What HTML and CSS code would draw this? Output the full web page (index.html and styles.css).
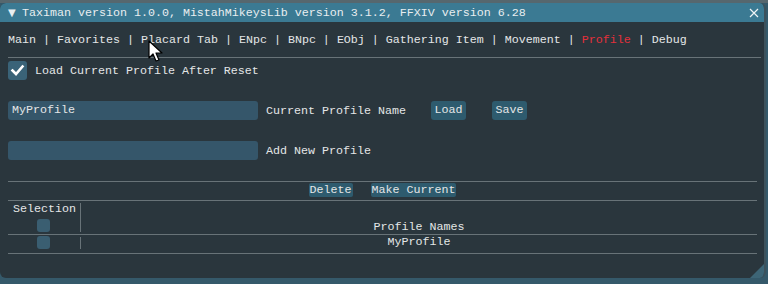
FILE: index.html
```html
<!DOCTYPE html>
<html>
<head>
    <title>Taximan</title>
    <link rel="stylesheet" href="styles.css">
</head>
<body>
    <div class="window">
        <div class="titlebar">
            <span class="arrow">&#9660;</span>
            <span class="title">Taximan version 1.0.0, MistahMikeysLib version 3.1.2, FFXIV version 6.28</span>
            <svg class="close" width="10" height="10" viewBox="0 0 10 10">
                <path d="M1 1 L9 9 M9 1 L1 9" stroke="#f0f4f6" stroke-width="1.2" fill="none"/>
            </svg>
        </div>
        <div class="content">
            <div class="tabs"><span>Main</span> | <span>Favorites</span> | <span>Placard Tab</span> | <span>ENpc</span> | <span>BNpc</span> | <span>EObj</span> | <span>Gathering Item</span> | <span>Movement</span> | <span class="active">Profile</span> | <span>Debug</span></div>

            <div class="check-row">
                <span class="checkbox">
                    <svg width="19" height="19" viewBox="0 0 19 19">
                        <path d="M4.5 9.5 L8 13 L14.5 5.5" stroke="#ffffff" stroke-width="2.6" fill="none" stroke-linecap="square"/>
                    </svg>
                </span>
                <span class="label">Load Current Profile After Reset</span>
            </div>

            <div class="field-row">
                <div class="input">MyProfile</div>
                <span class="label">Current Profile Name</span>
                <button class="btn load">Load</button>
                <button class="btn save">Save</button>
            </div>

            <div class="field-row">
                <div class="input"></div>
                <span class="label">Add New Profile</span>
            </div>

            <div class="table">
                <div class="table-actions">
                    <button class="btn small">Delete</button>
                    <button class="btn small">Make Current</button>
                </div>
                <div class="trow head">
                    <div class="sel">
                        <div class="sel-inner">
                            <span class="sel-title">Selection</span>
                            <span class="box"></span>
                        </div>
                    </div>
                    <div class="name">Profile Names</div>
                </div>
                <div class="trow item">
                    <div class="sel">
                        <div class="sel-inner">
                            <span class="box"></span>
                        </div>
                    </div>
                    <div class="name">MyProfile</div>
                </div>
            </div>
        </div>
        <span class="grip"></span>
    </div>

    <svg class="cursor" width="16" height="24" viewBox="0 0 16 24">
        <path d="M1 1 L1 18 L5 14 L8 21 L11 20 L8 13 L14 13 Z" fill="#ffffff" stroke="#000000" stroke-width="1.2" stroke-linejoin="round"/>
    </svg>
</body>
</html>
```
FILE: styles.css
```css
body {
    margin: 0;
    width: 768px;
    height: 284px;
    overflow: hidden;
    background: linear-gradient(#56676e 0, #56676e 3px, #35596a 3px);
    font-family: 'Liberation Mono', 'DejaVu Sans Mono', monospace;
    font-size: 11.67px;
    color: #e4e6e7;
    position: relative;
}
.window {
    position: relative;
    margin-top: 3px;
    width: 764px;
    height: 275px;
    background: #2a363d;
    border-radius: 6px;
    border-right: 2px solid #3d525c;
    overflow: hidden;
}
.titlebar {
    height: 19px;
    background: #3b7a93;
    display: flex;
    align-items: center;
    padding-left: 8px;
    color: #e9eef0;
    line-height: 14px;
    white-space: nowrap;
}
.arrow {
    font-family: 'DejaVu Sans', sans-serif;
    font-size: 10px;
    width: 14px;
}
.title {
    flex: 1;
}
.close {
    margin-right: 5px;
}
.content {
    padding: 0 3px 0 8px;
}
.tabs {
    margin-top: 11px;
    line-height: 14px;
    padding-bottom: 10px;
    border-bottom: 1px solid #687378;
    white-space: pre;
}
.tabs .active {
    color: #e2303b;
}
.check-row {
    margin-top: 3px;
    display: flex;
    align-items: center;
    height: 19px;
}
.checkbox {
    width: 19px;
    height: 19px;
    border-radius: 3px;
    background: #3a6378;
    display: flex;
}
.check-row .label {
    margin-left: 8px;
}
.field-row {
    margin-top: 21px;
    height: 19px;
    display: flex;
    align-items: center;
}
.input {
    width: 246px;
    height: 19px;
    line-height: 19px;
    padding-left: 4px;
    background: #35566a;
    border-radius: 3px;
}
.field-row .label {
    margin-left: 8px;
}
.btn {
    font-family: inherit;
    font-size: inherit;
    color: #e4e6e7;
    background: #2e5b6e;
    border: none;
    border-radius: 3px;
    padding: 0;
    height: 19px;
    line-height: 19px;
    width: 35px;
}
.btn.load {
    margin-left: 25px;
}
.btn.save {
    margin-left: 26px;
}
.table {
    margin-top: 21px;
    width: 749px;
    border-top: 1px solid #687378;
}
.table-actions {
    height: 18px;
    display: flex;
    justify-content: center;
    gap: 18px;
    border-bottom: 1px solid #687378;
}
.btn.small {
    width: auto;
    height: 14px;
    line-height: 14px;
    margin-top: 1px;
    padding: 0 1px;
    border-radius: 2px;
}
.trow {
    display: flex;
    border-bottom: 1px solid #687378;
}
.trow.head {
    height: 33px;
}
.trow.item {
    height: 18px;
}
.sel {
    width: 73px;
}
.sel-inner {
    border-right: 1px solid #687378;
    display: flex;
    flex-direction: column;
}
.head .sel-inner {
    margin-top: 2px;
    height: 29px;
}
.item .sel-inner {
    margin-top: 2px;
    height: 12px;
}
.sel-title {
    margin-top: -1px;
    line-height: 14px;
    padding-left: 5px;
}
.box {
    width: 13px;
    height: 13px;
    margin-left: 29px;
    border-radius: 3px;
    background: #3a5e71;
}
.head .box {
    margin-top: 3px;
}
.item .box {
    margin-top: -1px;
}
.name {
    flex: 1;
    display: flex;
    justify-content: center;
    align-items: flex-end;
    line-height: 14px;
}
.item .name {
    align-items: flex-start;
}
.grip {
    position: absolute;
    right: 0;
    bottom: 0;
    width: 0;
    height: 0;
    border-left: 14px solid transparent;
    border-bottom: 14px solid #3d6576;
}
.cursor {
    position: absolute;
    left: 148px;
    top: 40px;
}
```
